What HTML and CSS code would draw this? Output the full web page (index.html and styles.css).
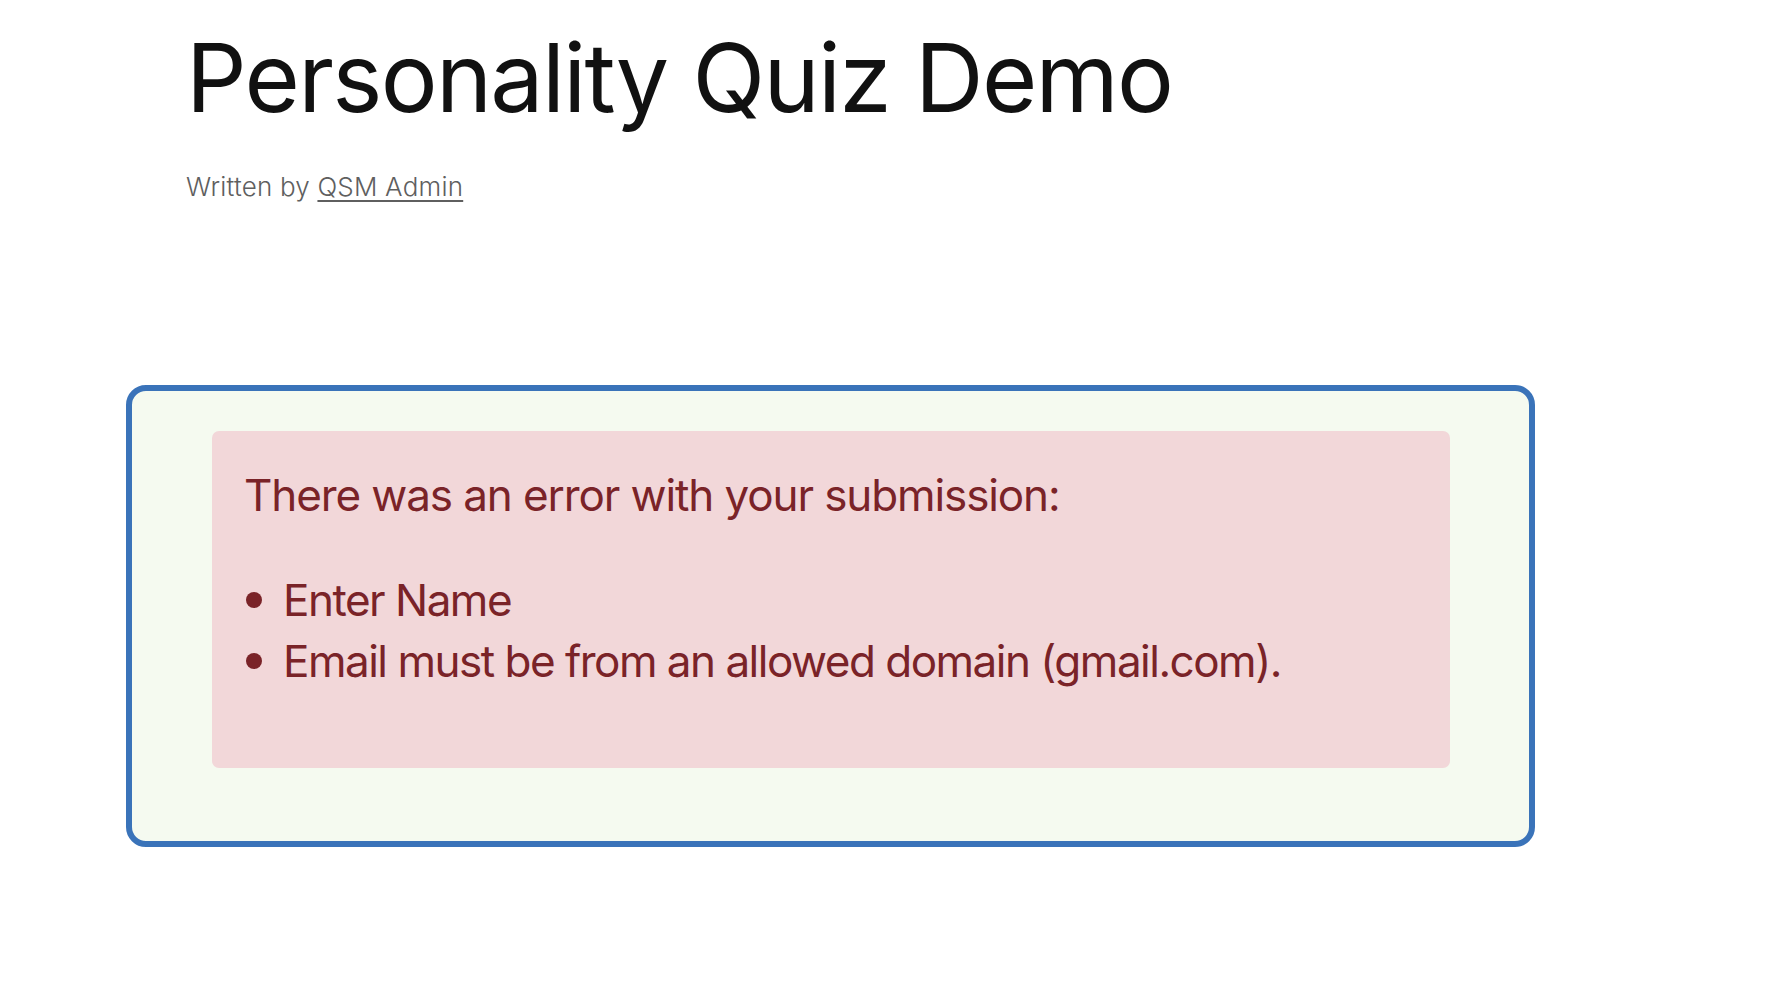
FILE: index.html
```html
<!DOCTYPE html>
<html lang="en">
<head>
<meta charset="utf-8">
<title>Personality Quiz Demo</title>
<link rel="stylesheet" href="styles.css">
</head>
<body>
<header class="post-header">
  <h1 class="post-title">Personality Quiz Demo</h1>
  <p class="post-meta">Written by <a href="#">QSM Admin</a></p>
</header>
<main class="quiz">
  <div class="quiz-alert">
    <p class="alert-title">There was an error with your submission:</p>
    <ul class="alert-list">
      <li>Enter Name</li>
      <li>Email must be from an allowed domain (gmail.com).</li>
    </ul>
  </div>
</main>
</body>
</html>
```
FILE: styles.css
```css
html, body {
  margin: 0;
  padding: 0;
  background: #ffffff;
}
body {
  font-family: Inter, "Noto Sans", sans-serif;
  color: #111111;
}
.post-header {
  padding: 30px 0 0 186px;
}
.post-title {
  margin: 0;
  font-size: 95px;
  font-weight: 400;
  line-height: 1;
  letter-spacing: -1.7px;
  color: #111111;
}
.post-meta {
  margin: 49px 0 0 0;
  font-size: 26px;
  line-height: 1;
  font-weight: 300;
  color: #5f5f5f;
  letter-spacing: 0.2px;
}
.post-meta a {
  color: #5f5f5f;
  text-decoration: underline;
  text-underline-offset: 4px;
  text-decoration-thickness: 2px;
}
.quiz {
  margin: 185px 0 0 126px;
  width: 1409px;
  box-sizing: border-box;
  border: 6px solid #3a73b9;
  border-radius: 20px;
  background: #f5faf0;
  padding: 40px 79px 73px 80px;
}
.quiz-alert {
  background: #f2d7d9;
  border-radius: 7px;
  padding: 38px 32px 76px 32px;
  color: #7a2328;
}
.alert-title {
  margin: 0;
  font-size: 44px;
  line-height: 1.2;
  letter-spacing: -1.1px;
}
.alert-list {
  list-style: none;
  margin: 48px 0 0 0;
  padding: 0;
}
.alert-list li {
  display: flex;
  align-items: center;
  font-size: 44px;
  line-height: 61px;
  letter-spacing: -1.5px;
}
.alert-list li::before {
  content: "";
  flex: none;
  width: 16px;
  height: 16px;
  border-radius: 50%;
  background: #7a2328;
  margin: 0 21px 0 2px;
}
```
